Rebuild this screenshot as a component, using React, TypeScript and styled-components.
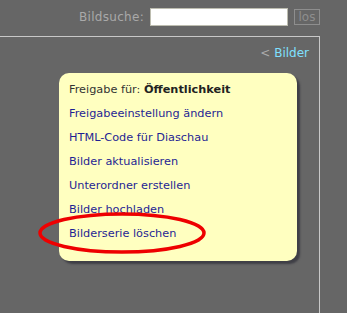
import React from "react";
import styled, { createGlobalStyle } from "styled-components";

const GlobalStyle = createGlobalStyle`
  html, body {
    margin: 0;
    padding: 0;
    background: #666666;
    font-family: "DejaVu Sans", Verdana, sans-serif;
  }
`;

const Page = styled.div`
  width: 347px;
  height: 313px;
  overflow: hidden;
  background: #666666;
`;

const SearchBar = styled.div`
  display: flex;
  align-items: center;
  justify-content: flex-end;
  height: 36px;
  padding-right: 27px;
  box-sizing: border-box;
  padding-bottom: 2px;
`;

const SearchLabel = styled.label`
  font-size: 12px;
  color: #a9a9a9;
  margin-right: 6px;
  letter-spacing: 0.3px;
`;

const SearchInput = styled.input`
  width: 138px;
  height: 18px;
  box-sizing: border-box;
  border: 1px solid #bdbdb0;
  background: #ffffff;
  margin: 0;
  padding: 0;
`;

const SearchButton = styled.button`
  margin: 0 0 0 6px;
  width: 26px;
  height: 16px;
  box-sizing: border-box;
  padding: 0;
  border: 1px solid #8e8e8e;
  background: transparent;
  color: #8e8e8e;
  font-family: "DejaVu Sans", Verdana, sans-serif;
  font-size: 12px;
  line-height: 13px;
`;

const Panel = styled.div`
  width: 320px;
  height: 277px;
  box-sizing: border-box;
  border-top: 1px solid #c8c8c8;
  border-right: 1px solid #c8c8c8;
  padding: 8px 10px 0 59px;
`;

const BackRow = styled.div`
  text-align: right;
  font-size: 12px;
  height: 16px;
  line-height: 16px;
  margin-bottom: 12px;
`;

const BackArrow = styled.span`
  color: #aaaaaa;
`;

const BackLink = styled.a`
  color: #7fe0ff;
  text-decoration: none;
`;

const Card = styled.div`
  position: relative;
  width: 238px;
  height: 188px;
  box-sizing: border-box;
  background: #ffffc0;
  border-radius: 10px;
  box-shadow: 3px 3px 2px #3f3f46;
  padding: 8px 0 0 10px;
`;

const Row = styled.div`
  font-size: 11.3px;
  height: 24px;
  line-height: 18px;
  white-space: nowrap;
`;

const Label = styled.span`
  color: #333333;
`;

const Strong = styled.b`
  color: #222222;
`;

const MenuLink = styled.a`
  color: #1f1f94;
  text-decoration: none;
`;

const Highlight = styled.svg`
  position: absolute;
  left: -20px;
  top: 139px;
  overflow: visible;
`;

const links = [
  "Freigabeeinstellung ändern",
  "HTML-Code für Diaschau",
  "Bilder aktualisieren",
  "Unterordner erstellen",
  "Bilder hochladen",
  "Bilderserie löschen",
];

export default function App() {
  return (
    <Page>
      <GlobalStyle />
      <SearchBar>
        <SearchLabel>Bildsuche:</SearchLabel>
        <SearchInput type="text" />
        <SearchButton>los</SearchButton>
      </SearchBar>
      <Panel>
        <BackRow>
          <BackArrow>&lt; </BackArrow>
          <BackLink href="#">Bilder</BackLink>
        </BackRow>
        <Card>
          <Row>
            <Label>Freigabe für: </Label>
            <Strong>Öffentlichkeit</Strong>
          </Row>
          {links.map((l) => (
            <Row key={l}>
              <MenuLink href="#">{l}</MenuLink>
            </Row>
          ))}
          <Highlight width="170" height="44">
            <ellipse cx="83" cy="21" rx="82" ry="19" fill="none" stroke="#ee0000" strokeWidth="3.5" />
          </Highlight>
        </Card>
      </Panel>
    </Page>
  );
}
